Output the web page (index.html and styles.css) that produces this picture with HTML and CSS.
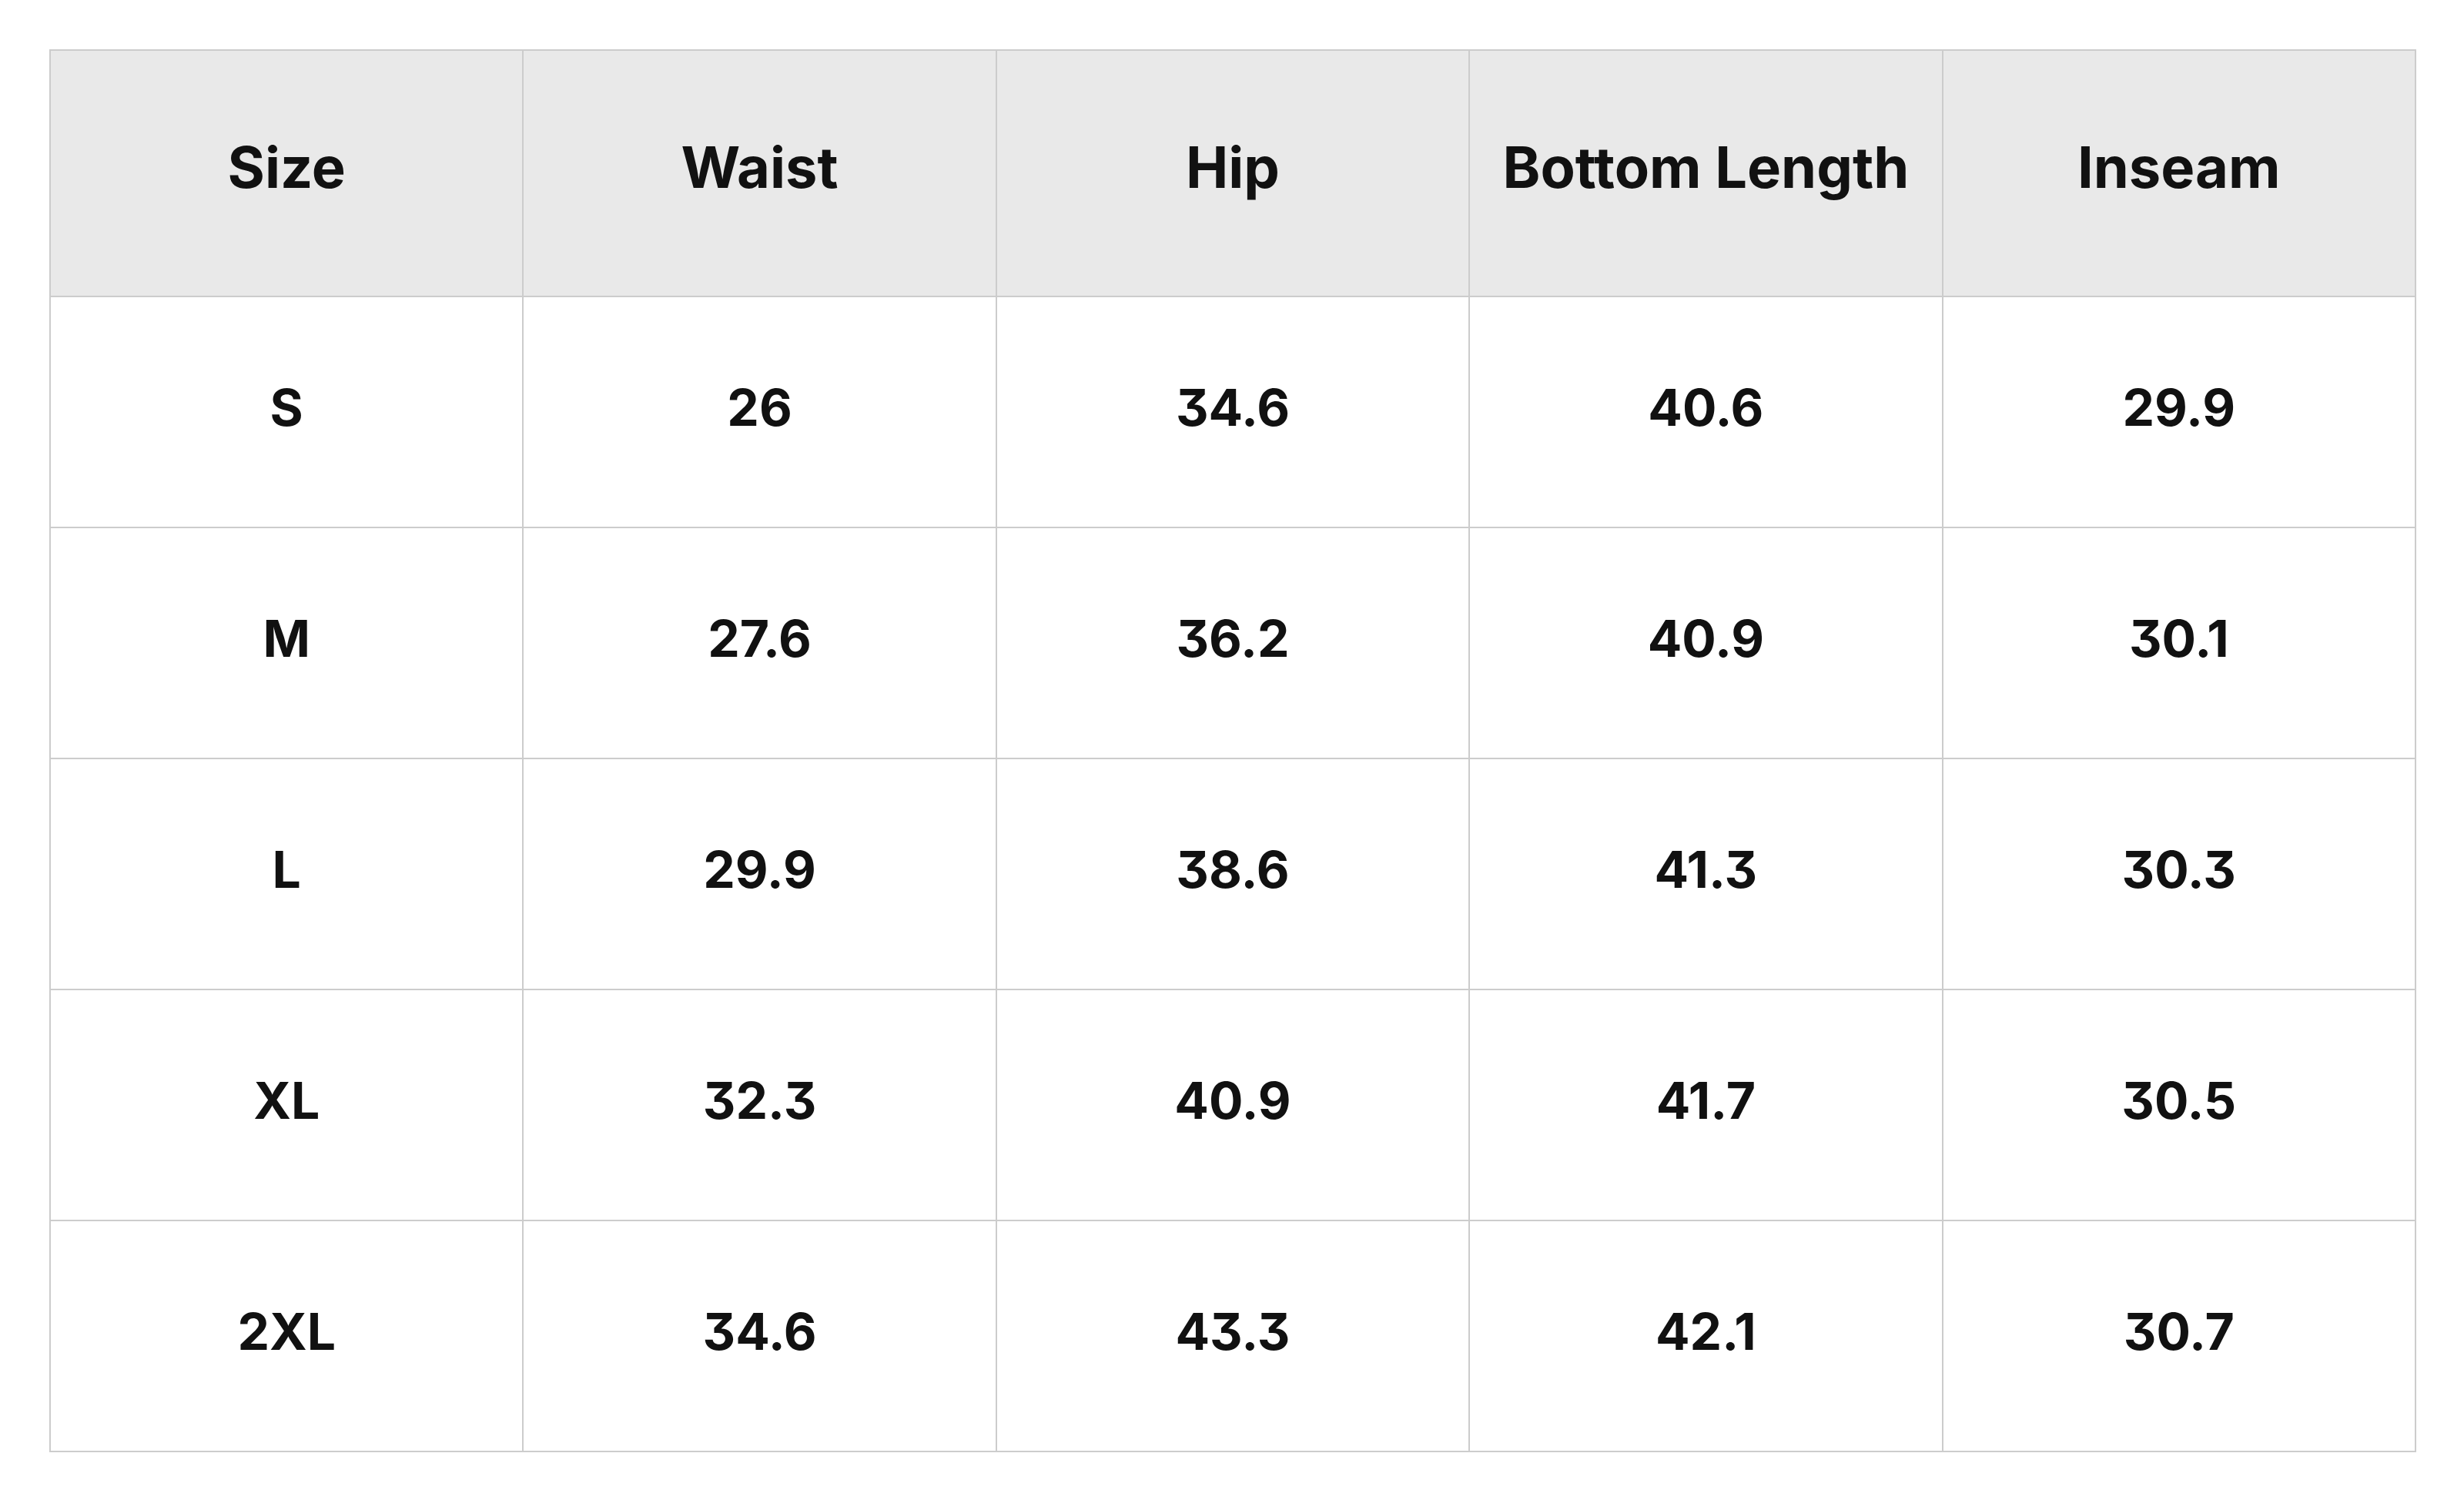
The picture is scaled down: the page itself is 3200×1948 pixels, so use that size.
FILE: index.html
```html
<!DOCTYPE html>
<html>
<head>
<meta charset="utf-8">
<link rel="stylesheet" href="styles.css">
</head>
<body>
<table class="size-table">
  <thead>
    <tr class="head-row">
      <th>Size</th><th>Waist</th><th>Hip</th><th>Bottom Length</th><th>Inseam</th>
    </tr>
  </thead>
  <tbody>
    <tr><td>S</td><td>26</td><td>34.6</td><td>40.6</td><td>29.9</td></tr>
    <tr><td>M</td><td>27.6</td><td>36.2</td><td>40.9</td><td>30.1</td></tr>
    <tr><td>L</td><td>29.9</td><td>38.6</td><td>41.3</td><td>30.3</td></tr>
    <tr><td>XL</td><td>32.3</td><td>40.9</td><td>41.7</td><td>30.5</td></tr>
    <tr><td>2XL</td><td>34.6</td><td>43.3</td><td>42.1</td><td>30.7</td></tr>
  </tbody>
</table>
</body>
</html>
```
FILE: styles.css
```css
html, body {
  margin: 0;
  padding: 0;
  background: #ffffff;
}
body {
  padding: 64px;
}
.size-table {
  width: 3074px;
  border-collapse: collapse;
  table-layout: fixed;
  font-family: Inter, "Liberation Sans", sans-serif;
  font-feature-settings: "cv09" 1;
  color: #111111;
}
.size-table th,
.size-table td {
  border: 2px solid #cccccc;
  text-align: center;
  vertical-align: middle;
  font-weight: 700;
  padding: 0 0 12px 0;
}
.size-table th {
  background: #e9e9e9;
  height: 306px;
  font-size: 74px;
  padding-bottom: 16px;
}
.size-table th {
  height: 302px;
}
.size-table td {
  height: 286px;
  font-size: 66px;
}
```
